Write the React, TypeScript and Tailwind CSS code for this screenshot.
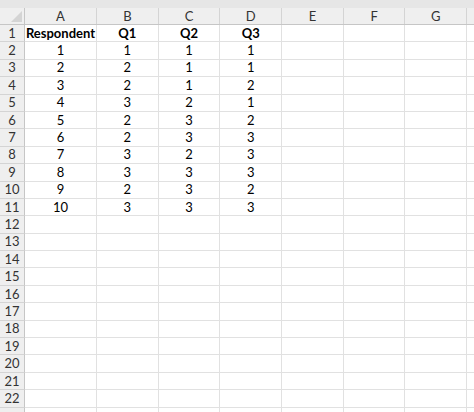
const cols = ['A', 'B', 'C', 'D', 'E', 'F', 'G', ''];
const widths = ['w-[72px]', 'w-[61.7px]', 'w-[61.7px]', 'w-[61.7px]', 'w-[61.7px]', 'w-[61.7px]', 'w-[61.7px]', 'w-[20px]'];

const data: (string | number)[][] = [
  ['Respondent', 'Q1', 'Q2', 'Q3'],
  [1, 1, 1, 1],
  [2, 2, 1, 1],
  [3, 2, 1, 2],
  [4, 3, 2, 1],
  [5, 2, 3, 2],
  [6, 2, 3, 3],
  [7, 3, 2, 3],
  [8, 3, 3, 3],
  [9, 2, 3, 2],
  [10, 3, 3, 3],
];

// 22 labelled rows, plus the top sliver of row 23 at the bottom edge
const rowCount = 23;

export default function App() {
  return (
    <div className="w-[474px] h-[412px] overflow-hidden bg-white text-[13px] text-black font-['Lato','Liberation_Sans',sans-serif]">
      <div className="h-[8px] bg-[#e6e6e6]" />
      {/* column headers */}
      <div className="flex h-[17px] bg-[#efefef] border-b border-[#c6c6c6]">
        <div className="relative w-[25px] shrink-0 border-r border-[#c6c6c6]">
          <div className="absolute right-[2px] bottom-[2px] w-0 h-0 border-l-[11px] border-l-transparent border-b-[11px] border-b-[#d4d4d4]" />
        </div>
        {cols.map((c, i) => (
          <div
            key={i}
            className={`${widths[i]} shrink-0 flex items-center justify-center text-[#333] border-r border-[#d4d4d4] leading-none`}
          >
            {c}
          </div>
        ))}
      </div>
      {Array.from({ length: rowCount }).map((_, r) => (
        <div key={r} className="flex h-[17.4px]">
          <div className="w-[25px] shrink-0 flex items-center justify-center bg-[#efefef] text-[#333] border-r border-[#c6c6c6] border-b border-b-[#d4d4d4] leading-none">
            {r < 22 ? r + 1 : ''}
          </div>
          {cols.map((_, i) => {
            const v = data[r]?.[i];
            return (
              <div
                key={i}
                className={`${widths[i]} shrink-0 flex items-center justify-center border-r border-b border-[#e1e1e1] leading-none ${r === 0 ? 'font-bold' : ''}`}
              >
                {v ?? ''}
              </div>
            );
          })}
        </div>
      ))}
    </div>
  );
}
